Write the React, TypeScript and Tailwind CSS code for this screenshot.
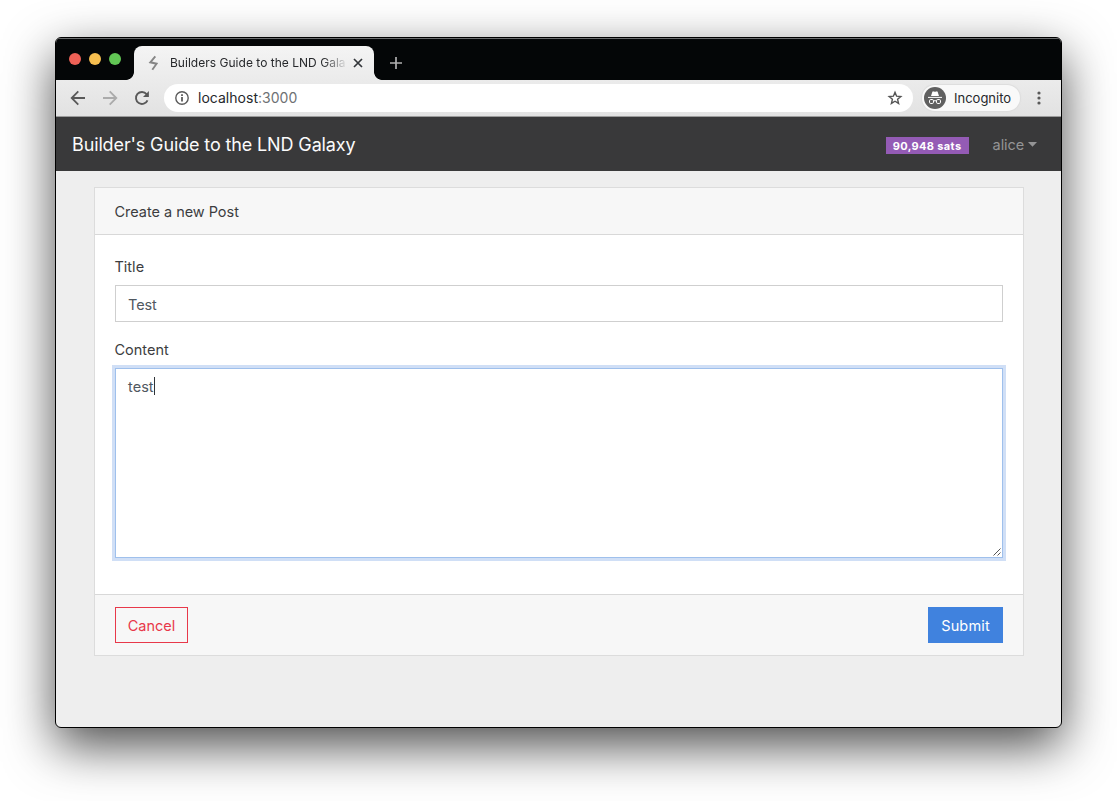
import React from "react";

function TabStrip() {
  return (
    <div className="flex h-[42px] items-start bg-[#040607] shadow-[inset_0_1px_0_#6b6d6e]">
      <div className="flex gap-2 pl-[13px] pt-[15px]">
        <span className="size-3 rounded-full bg-[#ee6156]" />
        <span className="size-3 rounded-full bg-[#f6be4f]" />
        <span className="size-3 rounded-full bg-[#62c655]" />
      </div>
      <div className="relative ml-[13px] mt-2 flex h-[34px] w-[240px] items-center rounded-t-lg bg-[#f1f1f1] bg-linear-to-b from-[#f4f4f4] to-[#ebebeb]">
        <span className="absolute -left-2 bottom-0 size-2 bg-[radial-gradient(circle_at_0_0,transparent_7.5px,#ebebeb_8.2px)]" />
        <span className="absolute -right-2 bottom-0 size-2 bg-[radial-gradient(circle_at_100%_0,transparent_7.5px,#ebebeb_8.2px)]" />
        <svg className="ml-[11px] size-4 shrink-0" viewBox="0 0 16 16" fill="none" stroke="#858585" strokeWidth="1.9">
          <path d="M10.3 1.3 5.300 7.300l6.300 1.400L7.300 14.800" />
        </svg>
        <div className="ml-[9px] w-[176px] overflow-hidden whitespace-nowrap text-[12px] leading-4 tracking-[0.02px] text-[#26282b] mask-r-from-87% mask-r-to-101%">
          Builders Guide to the LND Gala
        </div>
        <svg className="ml-[7px] size-[10px] shrink-0" viewBox="0 0 10 10" stroke="#33363a" strokeWidth="1.7">
          <path d="m1 1 8 8M9 1 1 9" />
        </svg>
      </div>
      <svg className="ml-4 mt-[19px] size-3" viewBox="0 0 12 12" stroke="#b0b0b0" strokeWidth="1.7">
        <path d="M6 0v12M0 6h12" />
      </svg>
    </div>
  );
}

function Toolbar() {
  return (
    <div className="flex h-[37px] items-center border-b border-[#9b9b9b] bg-linear-to-b from-[#ebebeb] to-[#e2e2e2] pl-[14px]">
      <svg className="size-4" viewBox="0 0 16 16" fill="none" stroke="#595959" strokeWidth="1.8">
        <path d="M15 8H2M8.3 1.4 1.7 8l6.6 6.6" />
      </svg>
      <svg className="ml-4 size-4" viewBox="0 0 16 16" fill="none" stroke="#ababab" strokeWidth="1.8">
        <path d="M1 8h13M7.7 1.4 14.3 8l-6.6 6.6" />
      </svg>
      <svg className="ml-4 size-4" viewBox="0 0 16 16" fill="none" stroke="#595959" strokeWidth="1.9">
        <path d="M13.5 10.3A6 6 0 1 1 12.6 4.1" />
        <path d="M14.9 1v6H9z" fill="#595959" stroke="none" />
      </svg>
      <div className="ml-[14px] flex h-7 w-[749px] items-center rounded-full bg-white pl-[11px] pr-[10px]">
        <svg className="size-[14px]" viewBox="0 0 14 14" fill="none" stroke="#5b5b5b" strokeWidth="1.4">
          <circle cx="7" cy="7" r="6.2" />
          <path d="M7 6v4.5M7 3.3v1.6" strokeWidth="1.8" />
        </svg>
        <span className="ml-[9px] grow text-[14px] leading-5 tracking-[0.020px] text-[#26282b]">
          localhost<span className="text-[#6e7174]">:3000</span>
        </span>
        <svg className="size-4" viewBox="0 0 24 24" fill="none" stroke="#555555" strokeWidth="2.1">
          <path d="m12 3.400 2.400 5.900 6.400.5-4.900 4.200 1.500 6.200L12 16.900l-5.400 3.300 1.500-6.200-4.900-4.200 6.400-.5z" />
        </svg>
      </div>
      <div className="ml-[9px] flex h-[26px] w-[98px] items-center rounded-full bg-[#f9f9f9] pl-0.5 shadow-[0_0_1px_1px_#dddddd]">
        <svg className="size-[22px]" viewBox="0 0 22 22">
          <circle cx="11" cy="11" r="11" fill="#5f5f5f" />
          <path d="M7 9 8.300 5.100q.3-.9 1.200-.7l1.500.4 1.500-.4q.9-.2 1.200.7L15 9z" fill="white" />
          <path d="M4 10.400h14" stroke="white" strokeWidth="1" />
          <g fill="none" stroke="white" strokeWidth="1">
            <rect x="5.500" y="12.500" width="4" height="4" rx="1.300" />
            <rect x="12.500" y="12.500" width="4" height="4" rx="1.300" />
            <path d="M9.500 14q1.500-.7 3 0" />
          </g>
        </svg>
        <span className="ml-2 text-[13px] leading-5 text-[#26282b]">Incognito</span>
      </div>
      <svg className="ml-[17.400px] h-[14px] w-1" viewBox="0 0 4 14" fill="#595959">
        <circle cx="2" cy="2" r="1.600" />
        <circle cx="2" cy="7" r="1.600" />
        <circle cx="2" cy="12" r="1.600" />
      </svg>
    </div>
  );
}

function Navbar() {
  return (
    <header className="flex h-[54px] items-center bg-[#39393a] pl-4 pr-6">
      <h1 className="grow pt-0.5 text-[18px] leading-7 tracking-[-0.130px] text-[#fbfbfb]">Builder's Guide to the LND Galaxy</h1>
      <span className="mt-[3px] flex h-[17px] w-[83px] items-center justify-center bg-[#945bb5] pt-px text-[11px] font-bold leading-none tracking-[0.350px] text-white">
        90,948 sats
      </span>
      <button className="ml-6 flex items-center pt-0.5 text-[14.500px] leading-6 tracking-[-0.100px] text-[#949495]">
        alice
        <svg className="-mt-0.5 ml-1 h-[5px] w-[9px]" viewBox="0 0 9 5" fill="#949495">
          <path d="M0 0h9L4.500 4.700z" />
        </svg>
      </button>
    </header>
  );
}

function PostForm() {
  return (
    <form className="ml-[38px] mr-[37px] mt-4 flex h-[469px] flex-col border border-[#dcdcdc] bg-white text-[14.500px] text-[#3c3d3f]">
      <div className="flex h-[47px] shrink-0 items-center border-b border-[#d8d8d8] bg-[#f7f7f7] pl-[19.500px] pt-px tracking-[-0.030px]">
        Create a new Post
      </div>
      <div className="flex grow flex-col px-5 pt-[21px]">
        <label className="-ml-[0.500px] h-[29px] leading-[22px]">Title</label>
        <div className="flex h-[37px] items-center border border-[#cfcfcf] px-3 pt-[3px] tracking-[-0.100px] text-[#505860]">Test</div>
        <label className="-ml-[0.500px] mt-[17px] h-[29px] leading-[22px]">Content</label>
        <div className="relative flex h-[190px] items-start border border-[#9fc0ec] px-3 pt-[7px] leading-[22px] tracking-[0.050px] text-[#505860] shadow-[0_0_0_3px_#d0dff6]">
          test
          <span className="mt-px h-[18px] w-px bg-[#303438]" />
          <svg className="absolute bottom-px right-px size-2" viewBox="0 0 8 8" stroke="#555555" strokeWidth="1">
            <path d="M.5 7.500 7.500.5M4.500 7.500 7.500 4.500" />
          </svg>
        </div>
      </div>
      <div className="flex h-[61px] shrink-0 items-center justify-between border-t border-[#d8d8d8] bg-[#f7f7f7] px-5">
        <button type="button" className="h-9 w-[73px] border border-[#e8384a] pt-0.5 text-[#e8384a]">
          Cancel
        </button>
        <button type="button" className="h-9 w-[75px] bg-[#4082de] pt-0.5 tracking-[0.150px] text-white">
          Submit
        </button>
      </div>
    </form>
  );
}

export default function App() {
  return (
    <div className="h-[801px] w-[1117px] overflow-hidden bg-white pl-[55px] pt-[37px] font-['Inter',sans-serif]">
      <div className="h-[691px] w-[1007px] overflow-hidden rounded-md border border-black bg-[#eeeeee] shadow-[0_18px_50px_rgba(0,0,0,0.7)]">
        <TabStrip />
        <Toolbar />
        <Navbar />
        <PostForm />
      </div>
    </div>
  );
}
